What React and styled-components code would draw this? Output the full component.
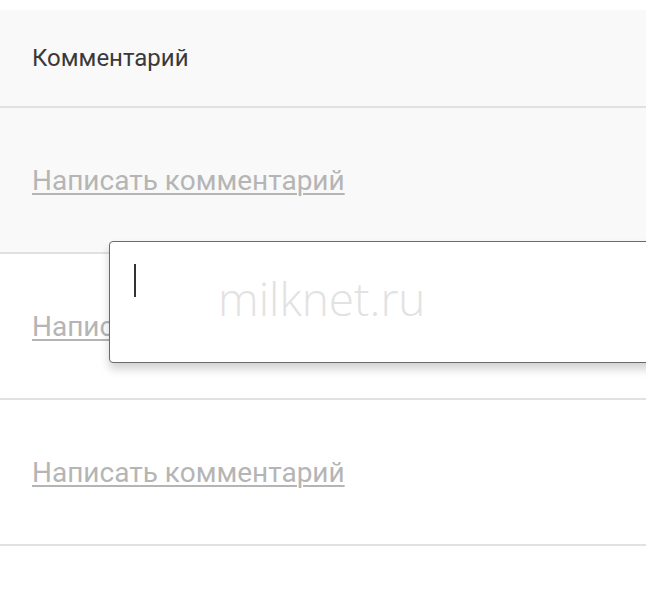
import React from 'react'
import styled, { createGlobalStyle } from 'styled-components'

const Global = createGlobalStyle`
  html, body { margin: 0; padding: 0; background: #fff; overflow: hidden; }
  body { font-family: Roboto, "Noto Sans", sans-serif; }
`

const Page = styled.div`
  position: relative;
  width: 646px;
  height: 594px;
  padding-top: 10px;
  box-sizing: border-box;
  overflow: hidden;
`

const Header = styled.div`
  height: 96px;
  display: flex;
  align-items: center;
  padding-left: 32px;
  background: #f9f9f9;
  border-bottom: 2px solid #e1e1e1;
  font-size: 24px;
  color: #3a3a3a;
`

const Row = styled.div`
  height: 144px;
  display: flex;
  align-items: center;
  padding-left: 32px;
  background: ${p => (p.$shaded ? '#f9f9f9' : '#fff')};
  border-bottom: 2px solid #e1e1e1;
`

const WriteLink = styled.a`
  font-size: 28px;
  color: #b5b5b5;
  text-decoration: underline;
  text-decoration-thickness: 2px;
  text-underline-offset: 3px;
  cursor: pointer;
`

const Editor = styled.div`
  position: absolute;
  left: 109px;
  top: 241px;
  width: 600px;
  height: 122px;
  background: #fff;
  border: 1px solid #6a6a6a;
  border-radius: 4px;
  box-shadow: 0 6px 10px rgba(0, 0, 0, 0.18);
  display: flex;
  align-items: flex-start;
  padding: 22px 0 0 24px;
  box-sizing: border-box;
`

const Caret = styled.span`
  display: block;
  width: 2px;
  height: 33px;
  background: #333;
`

const Watermark = styled.span`
  margin: 11px 0 0 82px;
  font-family: "Open Sans", "Liberation Sans", sans-serif;
  font-weight: 300;
  font-size: 46px;
  color: #e2e2e2;
  line-height: 1;
`

export default function App() {
  return (
    <Page>
      <Global />
      <Header>Комментарий</Header>
      <Row $shaded>
        <WriteLink>Написать комментарий</WriteLink>
      </Row>
      <Row>
        <WriteLink>Написать комментарий</WriteLink>
      </Row>
      <Row>
        <WriteLink>Написать комментарий</WriteLink>
      </Row>
      <Editor>
        <Caret />
        <Watermark>milknet.ru</Watermark>
      </Editor>
    </Page>
  )
}
